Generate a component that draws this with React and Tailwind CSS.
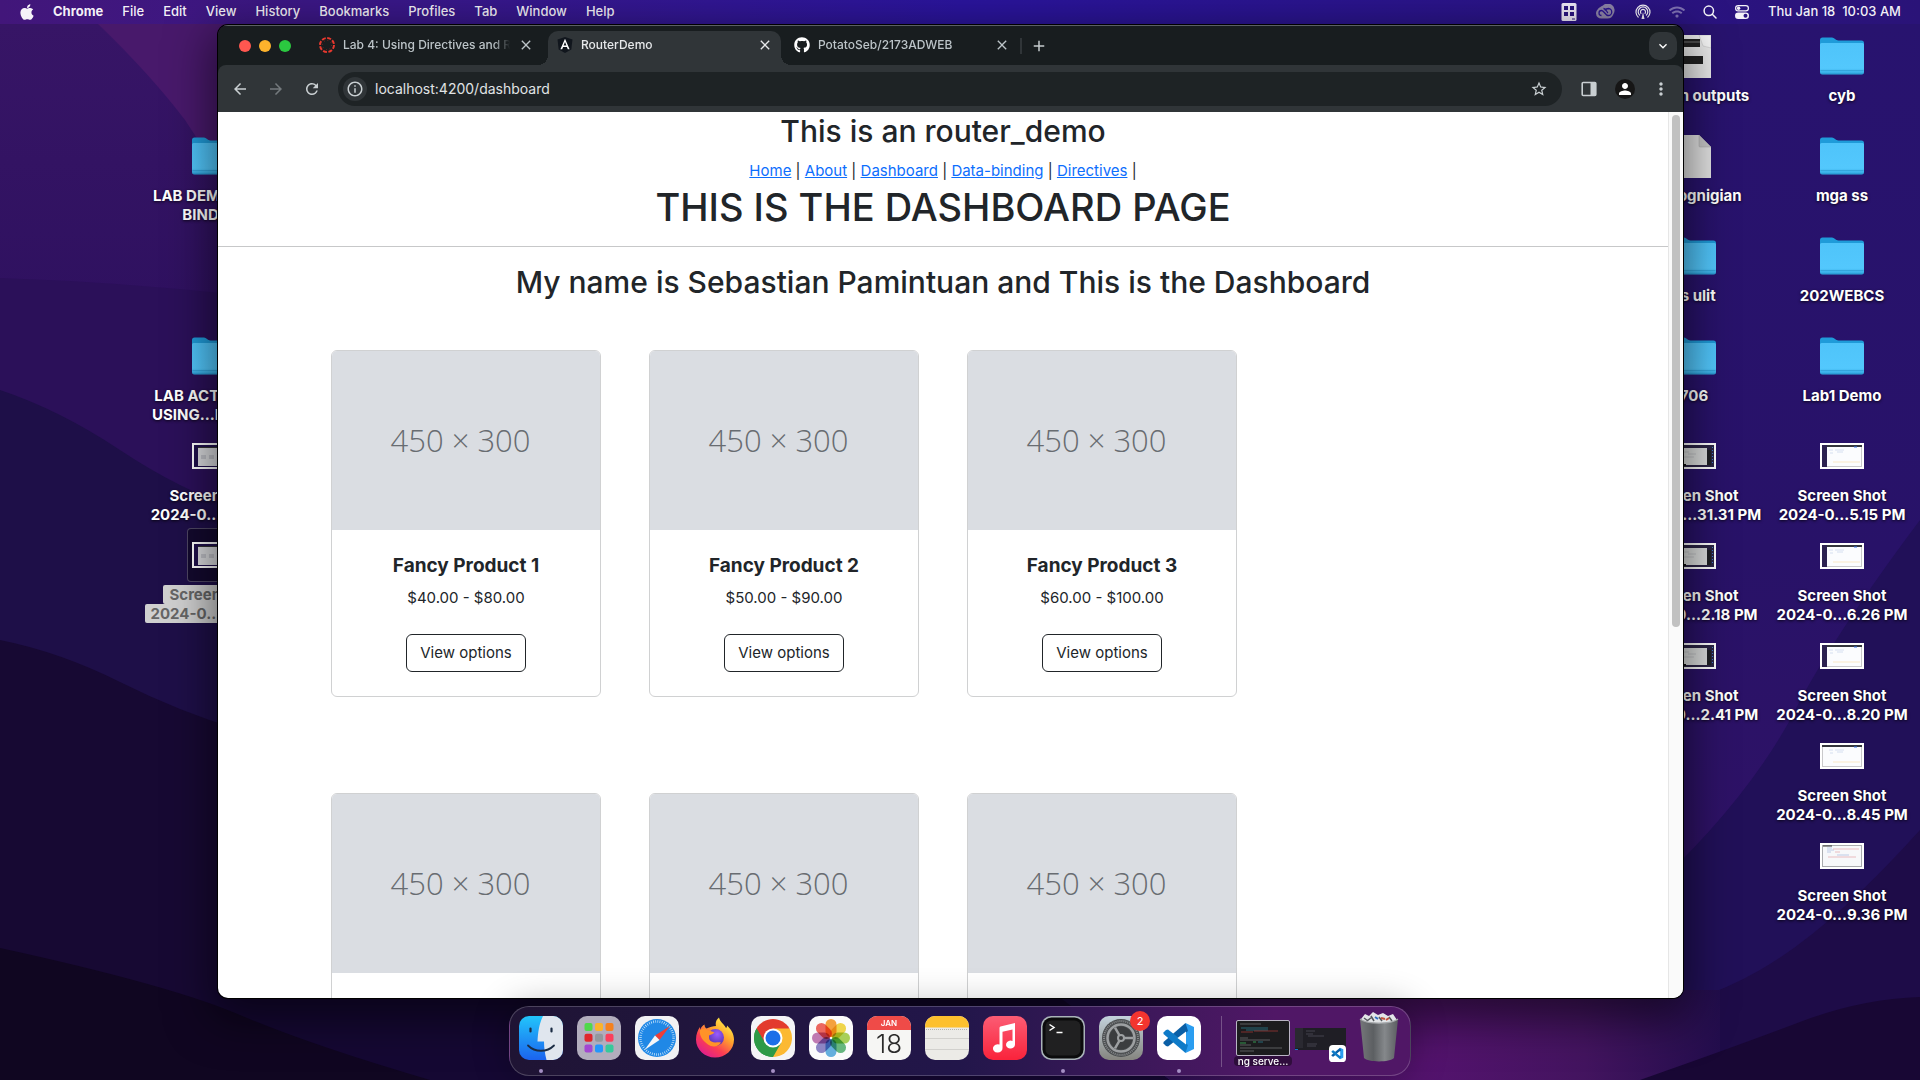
import React from "react";
import { FaApple, FaGithub, FaWifi } from "react-icons/fa";
import {
  MdArrowBack,
  MdArrowForward,
  MdRefresh,
  MdStarBorder,
  MdInfoOutline,
  MdMoreVert,
  MdExpandMore,
  MdPerson,
  MdClose,
  MdAdd,
} from "react-icons/md";

const menus = ["File", "Edit", "View", "History", "Bookmarks", "Profiles", "Tab", "Window", "Help"];

const links = ["Home", "About", "Dashboard", "Data-binding", "Directives"];

const products = [
  { name: "Fancy Product 1", price: "$40.00 - $80.00" },
  { name: "Fancy Product 2", price: "$50.00 - $90.00" },
  { name: "Fancy Product 3", price: "$60.00 - $100.00" },
  { name: "Fancy Product 4", price: "$70.00 - $110.00" },
  { name: "Fancy Product 5", price: "$80.00 - $120.00" },
  { name: "Fancy Product 6", price: "$90.00 - $130.00" },
];

const leftColumn = [
  null,
  { kind: "folder", lines: ["LAB DEMO DATA", "BINDING"] },
  null,
  { kind: "folder", lines: ["LAB ACTIVITY 4", "USING...ROUTER"] },
  { kind: "shot", look: "dark", lines: ["Screen Shot", "2024-0...0.12 PM"] },
  { kind: "shot", look: "dark", selected: true, lines: ["Screen Shot", "2024-0...1.47 PM"] },
];

const middleColumn = [
  { kind: "paper", lines: ["screen outputs"] },
  { kind: "file", lines: ["mecognigian"] },
  { kind: "folder", lines: ["ss ulit"] },
  { kind: "folder", lines: ["706"] },
  { kind: "shot", look: "window", lines: ["Screen Shot", "2024-0...31.31 PM"] },
  { kind: "shot", look: "window", lines: ["Screen Shot", "2024-0...2.18 PM"] },
  { kind: "shot", look: "window", lines: ["Screen Shot", "2024-0...2.41 PM"] },
];

const rightColumn = [
  { kind: "folder", lines: ["cyb"] },
  { kind: "folder", lines: ["mga ss"] },
  { kind: "folder", lines: ["202WEBCS"] },
  { kind: "folder", lines: ["Lab1 Demo"] },
  { kind: "shot", look: "browser", lines: ["Screen Shot", "2024-0...5.15 PM"] },
  { kind: "shot", look: "browser", lines: ["Screen Shot", "2024-0...6.26 PM"] },
  { kind: "shot", look: "browser", lines: ["Screen Shot", "2024-0...8.20 PM"] },
  { kind: "shot", look: "light", lines: ["Screen Shot", "2024-0...8.45 PM"] },
  { kind: "shot", look: "code", lines: ["Screen Shot", "2024-0...9.36 PM"] },
];

function Wallpaper() {
  return (
    <svg aria-hidden="true" viewBox="0 0 1920 1080" preserveAspectRatio="none" className="absolute inset-0 h-full w-full">
      <defs>
        <linearGradient id="wpBase" x1="0" y1="0" x2="1" y2="0">
          <stop offset="0" stopColor="#36155f" />
          <stop offset="0.3" stopColor="#31159a" />
          <stop offset="0.8" stopColor="#291380" />
          <stop offset="1" stopColor="#271268" />
        </linearGradient>
        <linearGradient id="wpLeft" gradientUnits="userSpaceOnUse" x1="0" y1="24" x2="0" y2="300">
          <stop offset="0" stopColor="#371566" />
          <stop offset="1" stopColor="#2f1160" />
        </linearGradient>
        <linearGradient id="wpRight" x1="0" y1="0" x2="0" y2="1">
          <stop offset="0" stopColor="#28136f" />
          <stop offset="0.5" stopColor="#281268" />
          <stop offset="0.8" stopColor="#2f1266" />
          <stop offset="1" stopColor="#2b1160" />
        </linearGradient>
        <radialGradient id="wpGlow" gradientUnits="userSpaceOnUse" cx="1420" cy="1060" r="330">
          <stop offset="0" stopColor="#55136f" />
          <stop offset="0.5" stopColor="#43145f" />
          <stop offset="1" stopColor="#1c0c48" />
        </radialGradient>
      </defs>
      <rect width="1920" height="1080" fill="url(#wpBase)" />
      <path d="M0 24H600V1080H0Z" fill="url(#wpLeft)" />
      <path d="M98 24Q150 74 185 120Q215 165 240 210V24Z" fill="#48196b" />
      <path d="M0 278Q120 282 240 295V540H0Z" fill="#2b1059" />
      <path d="M0 390Q60 410 120 450T240 510V1080H0Z" fill="#1e0f48" />
      <path d="M0 640Q60 652 120 682T240 730V1080H0Z" fill="#170933" />
      <path d="M1600 24H1920V1080H1600Z" fill="url(#wpRight)" />
      <path d="M1920 520Q1830 640 1790 720Q1740 810 1640 900V1080H1920Z" fill="#211058" />
      <path d="M1920 830Q1830 930 1760 970T1600 1020V1080H1920Z" fill="#1e0c48" />
      <path d="M200 990H1060L1170 1080H200Z" fill="#150833" />
      <path d="M1050 990L1170 1080H1720V990Z" fill="url(#wpGlow)" />
      <path d="M0 948Q170 985 240 1015T430 1080H0Z" fill="#100621" />
      <path d="M1640 1080Q1740 1045 1800 1022T1920 997V1080Z" fill="#180734" />
    </svg>
  );
}

function FolderIcon() {
  return (
    <svg aria-hidden="true" viewBox="0 0 44 38" className="h-[38px] w-11">
      <defs>
        <linearGradient id="folderFront" x1="0" y1="0" x2="0" y2="1">
          <stop offset="0" stopColor="#4fc4fa" />
          <stop offset="0.8" stopColor="#53c8fd" />
          <stop offset="1" stopColor="#2fa6de" />
        </linearGradient>
      </defs>
      <path d="M0 3a2.500 2.500 0 0 1 2.500-2.500H12c2.500 0 3.500 3 6.500 3H41.500A2.500 2.500 0 0 1 44 6V20H0Z" fill="#1f9bd9" />
      <path d="M0 7.500a1.500 1.500 0 0 1 1.500-1.500H42.500a1.500 1.500 0 0 1 1.500 1.500V35a2.500 2.500 0 0 1-2.500 2.500H2.500A2.500 2.500 0 0 1 0 35Z" fill="url(#folderFront)" />
      <path d="M0.500 33.500H43.500M1 36.800H43" stroke="#1c86bd" strokeWidth="0.600" opacity="0.700" />
    </svg>
  );
}

function PaperIcon() {
  return (
    <svg aria-hidden="true" viewBox="0 0 34 43" className="h-[43px] w-[34px]">
      <rect width="34" height="43" fill="#ececec" />
      <path d="M0 4H23V12H0ZM0 21H26V29H0Z" fill="#222" />
      <path d="M0 7H23" stroke="#777" />
      <path d="M22 0H34V13L26 11Z" fill="#f8f8f8" stroke="#c8c8c8" strokeWidth="0.600" />
    </svg>
  );
}

function FileIcon() {
  return (
    <svg aria-hidden="true" viewBox="0 0 34 43" className="h-[43px] w-[34px]">
      <path d="M0 0H22L34 12V43H0Z" fill="#e3e3e3" />
      <path d="M22 0L34 12H23a1 1 0 0 1-1-1Z" fill="#c9c9c9" stroke="#aaa" strokeWidth="0.500" />
    </svg>
  );
}

function ShotIcon({ look }) {
  return (
    <svg aria-hidden="true" viewBox="0 0 44 26" className="h-[26px] w-11">
      <rect width="44" height="26" fill="#fff" />
      {look === "dark" && (
        <g>
          <rect x="2" y="2" width="40" height="22" fill="#20104c" />
          <rect x="6" y="4" width="30" height="19" fill="#d9dadd" />
          <path d="M6 4.500H36" stroke="#333" />
          <path d="M9 12h5v4H9ZM17 12h5v4H17ZM25 12h5v4H25Z" fill="#bfc0c6" />
        </g>
      )}
      {look === "window" && (
        <g>
          <rect x="2" y="2" width="40" height="22" fill="#2b2444" />
          <rect x="4" y="5" width="31" height="17" fill="#dcdedd" />
          <path d="M35 7h4v15h-4Z" fill="#202124" />
          <path d="M3 22H14" stroke="#111" strokeWidth="2" />
          <path d="M12 9h5M16 11h8M12 14h10" stroke="#b8babd" strokeWidth="0.700" />
          <path d="M40.500 4V20" stroke="#3d7bd0" strokeDasharray="1 2" />
        </g>
      )}
      {(look === "browser" || look === "light") && (
        <g>
          <rect x="2" y="2" width="40" height="22" fill="#c9c9cb" />
          <rect x="3" y="4" width="38" height="19" fill="#fbfcfe" />
          <path d="M2 3H42" stroke="#33353c" strokeWidth="2" />
          {look === "browser" && <rect x="2" y="2" width="5" height="22" fill="#2c2150" />}
          <path d="M9 7h4M15 7h9M17 9h6M10 10h3" stroke="#cdd8ee" strokeWidth="0.800" />
          <path d="M34 4h3" stroke="#3a76e8" />
          <path d="M13 19H40" stroke="#fae9c8" />
        </g>
      )}
      {look === "code" && (
        <g>
          <rect x="2.500" y="2.500" width="39" height="21" fill="#f7f8fa" stroke="#a9abae" />
          <path d="M3 3h9" stroke="#333" strokeWidth="1" />
          <path d="M7 5h5M7 7h7M7 9h4M17 12h12" stroke="#b6c6e4" strokeWidth="0.900" />
          <path d="M13 6h26M15 9h5M8 14h28" stroke="#e6b5ba" strokeWidth="0.900" />
        </g>
      )}
    </svg>
  );
}

function DesktopItem({ item }) {
  if (!item) return <li className="h-[100px]" />;
  return (
    <li className="flex h-[100px] flex-col items-center">
      <div
        className={
          item.selected
            ? "mb-[3px] flex h-[54px] w-[54px] items-center justify-center rounded-sm border border-white/25 bg-black/35"
            : "mb-0.5 flex h-14 items-center justify-center"
        }
      >
        {item.kind === "folder" && <FolderIcon />}
        {item.kind === "paper" && <PaperIcon />}
        {item.kind === "file" && <FileIcon />}
        {item.kind === "shot" && <ShotIcon look={item.look} />}
      </div>
      <p className="flex flex-col items-center text-[15px] font-bold leading-[19px] whitespace-nowrap">
        {item.lines.map((line) => (
          <span
            key={line}
            className={
              item.selected
                ? "rounded-xs bg-[#d0d0d0] px-1.5 text-[#666]"
                : "text-white [text-shadow:0_1px_3px_rgba(0,0,0,0.8)]"
            }
          >
            {line}
          </span>
        ))}
      </p>
    </li>
  );
}

function MenuBar() {
  return (
    <header className="absolute inset-x-0 top-0 flex h-6 items-center bg-linear-to-r from-[#42167a] via-[#2a149c] to-[#2a1378] pr-[19px] pl-[18px] text-[13px] text-white/95">
      <button type="button" aria-label="Apple menu" className="mr-[17px]">
        <FaApple className="h-[18px] w-[18px]" />
      </button>
      <nav className="flex items-center gap-[19px]">
        <button type="button" className="font-bold">Chrome</button>
        {menus.map((m) => (
          <button key={m} type="button" className="font-medium">{m}</button>
        ))}
      </nav>
      <div className="ml-auto flex items-center">
        <svg aria-hidden="true" viewBox="0 0 16 18" className="mr-[18px] h-[18px] w-4">
          <rect x="0.500" width="15" height="18" rx="1.500" fill="#eee9f8" />
          <path d="M3 3h4v4H3ZM9 3h4v4H9ZM3 9h4v4H3ZM9 9h4v4H9Z" fill="#2b1680" />
          <path d="M11 16h3" stroke="#2b1680" />
        </svg>
        <svg aria-hidden="true" viewBox="0 0 20 16" className="mr-5 h-4 w-5 text-[#8d84a8]">
          <path d="M8 1.500a6.800 6.800 0 0 1 10.500 8.500c-1.200 3-3 4.500-6 4.500H6.500A5.200 5.200 0 0 1 1 9.500C1 6.500 3.500 3.500 8 1.500Z" fill="currentColor" />
          <path d="M6.500 11.500a2.500 2.500 0 0 1 0-5c2.500 0 4 5 6.500 5a3.500 3.500 0 0 0 .5-7c-2 0-3 1-3.500 2M8.500 4.500c2.500 0 3.500 4 4.500 4.500" fill="none" stroke="#2a1490" strokeWidth="1.300" />
        </svg>
        <svg aria-hidden="true" viewBox="0 0 16 16" className="mr-[18px] h-4 w-4" fill="none" stroke="currentColor" strokeWidth="1.200">
          <path d="M3.500 13.500a7 7 0 1 1 9 0" />
          <path d="M5 11.500a4.800 4.800 0 1 1 6 0" />
          <path d="M6.300 9.700a2.500 2.500 0 1 1 3.400 0" />
          <path d="M8 8L6.500 15h3Z" fill="currentColor" stroke="none" />
        </svg>
        <FaWifi aria-hidden="true" className="mr-[18px] h-4 w-4 text-white/40" />
        <svg aria-hidden="true" viewBox="0 0 14 14" className="mr-[18px] h-3.5 w-3.5" fill="none" stroke="currentColor" strokeWidth="1.500" strokeLinecap="round">
          <circle cx="5.800" cy="5.800" r="4.700" />
          <path d="M9.300 9.300L13 13" />
        </svg>
        <svg aria-hidden="true" viewBox="0 0 14 14" className="mr-[19px] h-3.5 w-3.5">
          <rect x="0.600" y="0.600" width="12.800" height="5.300" rx="2.650" fill="none" stroke="currentColor" strokeWidth="1.200" />
          <circle cx="3.600" cy="3.250" r="1.700" fill="currentColor" />
          <rect y="7.500" width="14" height="6.500" rx="3.250" fill="currentColor" />
          <circle cx="10.500" cy="10.750" r="2" fill="#2a1480" />
        </svg>
        <time className="font-medium whitespace-pre">Thu Jan 18  10:03 AM</time>
      </div>
    </header>
  );
}

function Tab({ icon, title, active, wide }) {
  return (
    <div
      className={
        active
          ? "relative flex h-[34px] w-[233px] items-center rounded-t-[10px] bg-[#303538] pr-2 pl-[9px] text-[#e6e8ea]"
          : wide
            ? "flex h-[34px] w-[239px] items-center pr-2.5 pl-[13px] text-[#bcc4c8]"
            : "flex h-[34px] w-[237px] items-center pr-3.5 pl-2 text-[#bcc4c8]"
      }
    >
      {active && (
        <>
          <span className="absolute bottom-0 -left-2.5 h-2.5 w-2.5 bg-[radial-gradient(circle_at_0_0,#181d1f_10px,#303538_10px)]" />
          <span className="absolute -right-2.5 bottom-0 h-2.5 w-2.5 bg-[radial-gradient(circle_at_100%_0,#181d1f_10px,#303538_10px)]" />
        </>
      )}
      <span className="mb-1.5 flex w-full items-center">
        {icon}
        <button
          type="button"
          className="mr-2 ml-2 min-w-0 flex-1 overflow-hidden text-left text-[12px] font-medium whitespace-nowrap [mask-image:linear-gradient(to_right,#000_90%,transparent)]"
        >
          {title}
        </button>
        <button type="button" aria-label={`Close ${title}`}>
          <MdClose className="h-4 w-4" />
        </button>
      </span>
    </div>
  );
}

function BrowserChrome() {
  return (
    <div className="bg-[#181d1f]">
      <div className="flex h-10 items-end border-t border-[#5b6063]">
        <div className="flex w-[101px] items-center gap-2 self-center pl-[21px]">
          <button type="button" aria-label="Close window" className="h-3 w-3 rounded-full bg-[#ff5750]" />
          <button type="button" aria-label="Minimize window" className="h-3 w-3 rounded-full bg-[#fdb32c]" />
          <button type="button" aria-label="Zoom window" className="h-3 w-3 rounded-full bg-[#2bc840]" />
        </div>
        <div className="-ml-2 flex">
          <Tab
            title="Lab 4: Using Directives and Router"
            icon={
              <svg aria-hidden="true" viewBox="0 0 16 16" className="h-4 w-4 shrink-0">
                <circle cx="8" cy="8" r="7" fill="none" stroke="#e5382e" strokeWidth="2" strokeDasharray="4 1.500" />
                <circle cx="8" cy="8" r="4.600" fill="none" stroke="#a32a25" strokeWidth="0.800" strokeDasharray="0.800 2.800" />
              </svg>
            }
          />
          <Tab
            active
            title="RouterDemo"
            icon={
              <svg aria-hidden="true" viewBox="0 0 16 16" className="h-4 w-4 shrink-0">
                <path d="M8 0L15.500 2.600L14.300 12.500L8 16L1.700 12.500L.5 2.600Z" fill="#11161d" />
                <path d="M8 1.800L3.400 12.200H5.200L6.100 9.900H9.900L10.800 12.200H12.600ZM8 5.100L9.400 8.400H6.600Z" fill="#fff" fillRule="evenodd" />
              </svg>
            }
          />
          <Tab wide title="PotatoSeb/2173ADWEB" icon={<FaGithub aria-hidden="true" className="h-4 w-4 shrink-0 text-white" />} />
        </div>
        <div className="flex items-center self-center">
          <span className="h-4 w-0.5 bg-[#303538]" />
          <button type="button" aria-label="New tab" className="ml-2 text-[#c5cbce]">
            <MdAdd className="h-[18px] w-[18px]" />
          </button>
        </div>
        <button
          type="button"
          aria-label="Search tabs"
          className="mr-1.5 ml-auto flex h-7 w-7 items-center justify-center self-center rounded-[10px] bg-[#303538] text-white"
        >
          <MdExpandMore className="h-4 w-4" />
        </button>
      </div>
      <div className="flex h-[47px] items-center rounded-t-lg bg-[#303538] text-[#c9cfd2]">
        <button type="button" aria-label="Back" className="ml-[13px]">
          <MdArrowBack className="h-[18px] w-[18px]" />
        </button>
        <button type="button" aria-label="Forward" className="ml-[18px] text-[#747a7d]">
          <MdArrowForward className="h-[18px] w-[18px]" />
        </button>
        <button type="button" aria-label="Reload" className="mr-[17px] ml-[18px]">
          <MdRefresh className="h-[18px] w-[18px]" />
        </button>
        <div className="flex h-[34px] flex-1 items-center rounded-full bg-[#1e2325] pr-3.5 pl-[5px]">
          <button type="button" aria-label="View site information" className="flex h-6 w-6 items-center justify-center rounded-full bg-[#303538]">
            <MdInfoOutline className="h-[18px] w-[18px]" />
          </button>
          <input
            type="text"
            aria-label="Address"
            defaultValue="localhost:4200/dashboard"
            className="ml-2 flex-1 bg-transparent text-[14px] text-[#e0e3e5] outline-none"
          />
          <button type="button" aria-label="Bookmark this tab">
            <MdStarBorder className="h-[18px] w-[18px]" />
          </button>
        </div>
        <button type="button" aria-label="Side panel" className="ml-[19px]">
          <svg aria-hidden="true" viewBox="0 0 16 16" className="h-4 w-4">
            <rect x="1.200" y="1.500" width="13.600" height="13" rx="1" fill="none" stroke="currentColor" strokeWidth="1.600" />
            <path d="M9.500 1.500H15V14.500H9.500Z" fill="currentColor" />
          </svg>
        </button>
        <button type="button" aria-label="Profile" className="ml-[18px] flex h-5 w-5 items-center justify-center rounded-full bg-[#161616] text-white">
          <MdPerson className="h-[18px] w-[18px]" />
        </button>
        <button type="button" aria-label="Menu" className="mr-3 ml-4">
          <MdMoreVert className="h-5 w-5" />
        </button>
      </div>
    </div>
  );
}

function ProductCard({ product }) {
  return (
    <article className="overflow-hidden rounded-md border border-[#d0d1d2] bg-white text-center">
      <div className="flex h-[179px] items-center justify-center bg-[#dadde2] pr-[11px] font-['Open_Sans',sans-serif] text-[31px] font-light text-[#686c71]">
        450 × 300
      </div>
      <div className="p-6">
        <h5 className="mb-2 text-[19px] font-bold leading-6">{product.name}</h5>
        <p className="text-[15px] leading-6">{product.price}</p>
      </div>
      <div className="px-6 pb-6">
        <button type="button" className="h-[38px] rounded-md border border-[#212529] px-[13px] text-[15px] leading-6">
          View options
        </button>
      </div>
    </article>
  );
}

function Page() {
  return (
    <div className="flex min-h-0 flex-1 bg-white">
      <main className="min-w-0 flex-1 overflow-hidden text-center text-[#212529]">
        <h2 className="mb-2 text-[30px] font-medium leading-[39px]">This is an router_demo</h2>
        <nav className="text-[15px] leading-6">
          {links.map((l) => (
            <React.Fragment key={l}>
              <a href="#" className="text-[#0d6efd] underline">{l}</a>
              {" | "}
            </React.Fragment>
          ))}
        </nav>
        <h1 className="mb-2 text-[38px] font-medium leading-[48px]">THIS IS THE DASHBOARD PAGE</h1>
        <hr className="mt-[15px] mb-4 border-[#c7c8c9]" />
        <h2 className="mb-2 text-[30px] font-medium leading-[39px]">My name is Sebastian Pamintuan and This is the Dashboard</h2>
        <section className="mt-12 grid grid-cols-[repeat(3,270px)] gap-x-12 gap-y-24 pl-[113px]">
          {products.map((p) => (
            <ProductCard key={p.name} product={p} />
          ))}
        </section>
      </main>
      <div className="w-[15px] border-l border-[#e6e6e6] bg-[#fafafa] pt-[3px]">
        <div className="mx-auto h-[58%] w-2 rounded-full bg-[#c1c1c1]" />
      </div>
    </div>
  );
}

function FinderIcon() {
  return (
    <svg aria-hidden="true" viewBox="0 0 44 44" className="h-11 w-11">
      <defs>
        <linearGradient id="finderBlue" x1="0" y1="0" x2="0" y2="1">
          <stop offset="0" stopColor="#22c5fb" />
          <stop offset="1" stopColor="#1b63ee" />
        </linearGradient>
        <clipPath id="finderClip"><rect width="44" height="44" rx="10" /></clipPath>
      </defs>
      <g clipPath="url(#finderClip)">
        <rect width="44" height="44" fill="url(#finderBlue)" />
        <path d="M24 0C20 8 19 17 18.500 25.500H25C25 32 26 38 27.500 44H44V0Z" fill="#e0e6ee" />
      </g>
      <path d="M11.500 12.500V15.500M32.500 12.500V15.500" stroke="#1b2c44" strokeWidth="2.200" strokeLinecap="round" />
      <path d="M9 29.500C16 36.500 28 36.500 35 29.500" fill="none" stroke="#1b2c44" strokeWidth="1.800" strokeLinecap="round" />
    </svg>
  );
}

const padColors = ["#4fd94b", "#fbb32b", "#f5811f", "#e0262b", "#93989d", "#fb3f5c", "#a347d1", "#2596fb", "#37c99b"];

function LaunchpadIcon() {
  return (
    <svg aria-hidden="true" viewBox="0 0 44 44" className="h-11 w-11">
      <rect width="44" height="44" rx="10" fill="#b2adbd" />
      {padColors.map((c, i) => (
        <rect key={c} x={7.500 + (i % 3) * 10.500} y={7 + Math.floor(i / 3) * 10.700} width="8" height="8" rx="2" fill={c} />
      ))}
    </svg>
  );
}

function SafariIcon() {
  return (
    <svg aria-hidden="true" viewBox="0 0 44 44" className="h-11 w-11">
      <rect width="44" height="44" rx="10" fill="#f1f1f3" />
      <circle cx="22" cy="22" r="19" fill="#2088e6" />
      <circle cx="22" cy="22" r="16.500" fill="none" stroke="#d5ebfc" strokeWidth="2.500" strokeDasharray="0.700 1.460" />
      <path d="M35 10L20 19.500L24.500 24Z" fill="#ee3d37" />
      <path d="M9.500 34L20 19.500L24.500 24Z" fill="#f6f6f8" />
    </svg>
  );
}

function FirefoxIcon() {
  return (
    <svg aria-hidden="true" viewBox="0 0 44 44" className="h-11 w-11">
      <defs>
        <linearGradient id="foxBody" x1="0.850" y1="0.100" x2="0.250" y2="0.950">
          <stop offset="0" stopColor="#fff04a" />
          <stop offset="0.350" stopColor="#ffa52c" />
          <stop offset="0.700" stopColor="#fb3d53" />
          <stop offset="1" stopColor="#e0208a" />
        </linearGradient>
        <radialGradient id="foxGlobe" cx="0.600" cy="0.300" r="0.800">
          <stop offset="0" stopColor="#9a5cff" />
          <stop offset="1" stopColor="#4a2b9c" />
        </radialGradient>
      </defs>
      <path d="M23 10C22 6 24 3 26 1.500C27 6 31 8 33 12C34 11.500 34 10 34 9.500C38 13 41 18 41 23.500C41 34 32.500 41.500 22 41.500S3 33.500 3 23.500C3 18 5 13.500 7 11V14C8 11 10 9.500 11.500 8.500C11.500 10 12 11.500 13.500 12.500C17 11 20 10 23 10Z" fill="url(#foxBody)" />
      <circle cx="22.500" cy="21.500" r="8.500" fill="url(#foxGlobe)" />
      <path d="M7 14C10 12 13 12.500 15 14.500C17 15 19 15 21.500 16.500C19.500 18.500 17 18.500 16 19.500C16 22 16 24.500 18.500 25.500C22 27.500 25 25.500 28 26.500C25.500 31 19 31.500 15 28.500C10 25 6 20 7 14Z" fill="#ff9328" />
    </svg>
  );
}

function ChromeIcon() {
  return (
    <svg aria-hidden="true" viewBox="0 0 44 44" className="h-11 w-11">
      <rect width="44" height="44" rx="10" fill="#f4f4f6" />
      <path d="M22 22L5.550 12.500A19 19 0 0 1 38.450 12.500Z" fill="#e33b2e" />
      <path d="M22 22L38.450 12.500A19 19 0 0 1 22 41Z" fill="#fcb932" />
      <path d="M22 22L22 41A19 19 0 0 1 5.550 12.500Z" fill="#2d9a47" />
      <path d="M22 12.500H38.450L30.200 26.700Z" fill="#fcb932" />
      <path d="M13.800 26.700L5.550 12.500L22 12.500Z" fill="#e33b2e" />
      <path d="M13.800 26.700L5.550 12.500A19 19 0 0 0 22 41L30.200 26.700Z" fill="#2d9a47" />
      <circle cx="22" cy="22" r="9.500" fill="#fff" />
      <circle cx="22" cy="22" r="7.500" fill="#1d6fe8" />
    </svg>
  );
}

const petals = ["#f7941d", "#f1d22c", "#9ccb3b", "#4fae6b", "#4aa3dc", "#7a72bd", "#b765a8", "#ee4f45"];

function PhotosIcon() {
  return (
    <svg aria-hidden="true" viewBox="0 0 44 44" className="h-11 w-11">
      <rect width="44" height="44" rx="10" fill="#fbfbfb" />
      {petals.map((c, i) => (
        <rect key={c} x="16.500" y="3" width="11" height="18" rx="5.500" fill={c} opacity="0.850" transform={`rotate(${i * 45} 22 22)`} className="mix-blend-multiply" />
      ))}
    </svg>
  );
}

function NotesIcon() {
  return (
    <svg aria-hidden="true" viewBox="0 0 44 44" className="h-11 w-11">
      <rect width="44" height="44" rx="10" fill="#ecebe7" />
      <path d="M0 11.500V10A10 10 0 0 1 10 0H34A10 10 0 0 1 44 10V11.500Z" fill="#fdc02e" />
      <path d="M1 13.500H43" stroke="#b6b4ae" strokeWidth="1" strokeDasharray="1 1" />
      <path d="M0 22.500H44M0 33.500H44" stroke="#cbcac6" strokeWidth="0.800" />
    </svg>
  );
}

function MusicIcon() {
  return (
    <svg aria-hidden="true" viewBox="0 0 44 44" className="h-11 w-11">
      <defs>
        <linearGradient id="musicRed" x1="0" y1="0" x2="0" y2="1">
          <stop offset="0" stopColor="#fb5c74" />
          <stop offset="1" stopColor="#fa233b" />
        </linearGradient>
      </defs>
      <rect width="44" height="44" rx="10" fill="url(#musicRed)" />
      <path d="M17.500 10.500L32 7V28.500A4.500 4 0 1 1 29.500 25V13.500L19.500 15.800V32A4.800 4.200 0 1 1 16.500 28.500V12Q16.500 10.800 17.500 10.500Z" fill="#fff" />
    </svg>
  );
}

function TerminalIcon() {
  return (
    <svg aria-hidden="true" viewBox="0 0 44 44" className="h-11 w-11">
      <rect width="44" height="44" rx="10" fill="#a9b3b8" />
      <rect x="1.500" y="1.500" width="41" height="41" rx="9" fill="#0b0b0c" />
      <rect x="4.500" y="4.500" width="35" height="35" rx="6" fill="#202021" />
      <path d="M8.500 8.500L13 11.500L8.500 14.500M15.500 16.500H21.500" fill="none" stroke="#fff" strokeWidth="1.500" />
    </svg>
  );
}

function SettingsIcon() {
  return (
    <svg aria-hidden="true" viewBox="0 0 44 44" className="h-11 w-11">
      <defs>
        <linearGradient id="gearBg" x1="0" y1="0" x2="0" y2="1">
          <stop offset="0" stopColor="#c3d2dc" />
          <stop offset="1" stopColor="#85857f" />
        </linearGradient>
      </defs>
      <rect width="44" height="44" rx="10" fill="url(#gearBg)" />
      <circle cx="22" cy="22" r="19" fill="#4b4e50" />
      <circle cx="22" cy="22" r="17" fill="none" stroke="#85888a" strokeWidth="2" strokeDasharray="1 1" />
      <circle cx="22" cy="22" r="13.500" fill="none" stroke="#9da0a2" strokeWidth="2.500" />
      <circle cx="22" cy="22" r="11.500" fill="#3b3d3f" />
      <path d="M22 22L34 22M22 22L16 11.600M22 22L16 32.400" stroke="#9da0a2" strokeWidth="2.500" />
      <circle cx="22" cy="22" r="4" fill="#9da0a2" />
      <circle cx="22" cy="22" r="2" fill="#3b3d3f" />
    </svg>
  );
}

function CodeIcon({ small }) {
  return (
    <svg aria-hidden="true" viewBox="0 0 44 44" className={small ? "h-[17px] w-[17px]" : "h-11 w-11"}>
      <rect width="44" height="44" rx="10" fill="#fff" />
      <path d="M28.500 7L37 11V33L28.500 37Z" fill="#2a9df0" />
      <path d="M28.500 7L31 15L11 30.500L9 30L6.500 27.500V26Z" fill="#0a5fa6" />
      <path d="M28.500 37L31 29L11 13.500L9 14L6.500 16.500V18Z" fill="#0f7bc8" />
      <path d="M29 15.500V28.500L20.500 22Z" fill="#fff" />
    </svg>
  );
}

function TrashIcon() {
  return (
    <svg aria-hidden="true" viewBox="0 0 40 50" className="h-[50px] w-10">
      <defs>
        <linearGradient id="trashBody" x1="0" y1="0" x2="1" y2="0">
          <stop offset="0" stopColor="#75777a" />
          <stop offset="0.350" stopColor="#5c5f62" />
          <stop offset="0.650" stopColor="#85888b" />
          <stop offset="1" stopColor="#5b5d61" />
        </linearGradient>
      </defs>
      <path d="M2 7L6 2L10 4L14 0L19 3L24 1L29 4L34 2L38 8L35 12H5Z" fill="#e3e5e8" />
      <path d="M5 6l4 3M12 4l3 5M20 5l3 4M30 5l3 4M8 9l5-4" stroke="#55585d" strokeWidth="1.500" />
      <path d="M16 5l3 2" stroke="#2f6fc2" strokeWidth="2" />
      <path d="M22 6l4 1M27 8l3-2" stroke="#c2523b" strokeWidth="2" />
      <path d="M1 7C8 12.500 32 12.500 39 7L35 46C31 50.500 9 50.500 5 46Z" fill="url(#trashBody)" />
      <path d="M1 7C8 12.500 32 12.500 39 7" fill="none" stroke="#a7aaad" strokeWidth="1.200" />
    </svg>
  );
}

function CalendarIcon() {
  return (
    <span className="flex h-11 w-11 flex-col overflow-hidden rounded-[10px] bg-[#f6f6f4] text-center">
      <span className="h-3.5 bg-[#ef4b48] text-[8px] font-semibold leading-[15px] text-white">JAN</span>
      <span className="text-[26px] font-light leading-[28px] text-[#2a2a2a]">18</span>
    </span>
  );
}

const apps = [
  { name: "Finder", icon: <FinderIcon />, running: true },
  { name: "Launchpad", icon: <LaunchpadIcon /> },
  { name: "Safari", icon: <SafariIcon /> },
  { name: "Firefox", icon: <FirefoxIcon /> },
  { name: "Google Chrome", icon: <ChromeIcon />, running: true },
  { name: "Photos", icon: <PhotosIcon /> },
  { name: "Calendar", icon: <CalendarIcon /> },
  { name: "Notes", icon: <NotesIcon /> },
  { name: "Music", icon: <MusicIcon /> },
  { name: "Terminal", icon: <TerminalIcon />, running: true },
  { name: "System Preferences", icon: <SettingsIcon />, badge: "2" },
  { name: "Visual Studio Code", icon: <CodeIcon />, running: true },
];

function Dock() {
  return (
    <footer className="absolute bottom-1 left-1/2 flex h-[70px] -translate-x-1/2 items-start rounded-[20px] border border-white/20 bg-linear-to-r from-[#1f1434] via-[#22164a] via-50% to-[#501766] to-85% px-[9px] pt-[9px] shadow-[0_0_36px_rgba(0,0,0,0.3)]">
      <div className="flex gap-3.5">
        {apps.map((a) => (
          <button key={a.name} type="button" aria-label={a.name} className="relative flex flex-col items-center">
            {a.icon}
            {a.badge && (
              <span className="absolute -top-[5px] -right-[7px] flex h-5 w-5 items-center justify-center rounded-full bg-[#f3352f] text-[11px] text-white">
                {a.badge}
              </span>
            )}
            {a.running && <span className="mt-[9px] h-1 w-1 rounded-full bg-[#a58fc4]" />}
          </button>
        ))}
      </div>
      <span className="mr-[14px] ml-5 h-[51px] w-px bg-white/25" />
      <button type="button" aria-label="ng serve window" className="mt-1 flex w-[54px] flex-col items-center">
        <svg aria-hidden="true" viewBox="0 0 54 36" className="h-9 w-[54px]">
          <rect x="0.500" y="0.500" width="53" height="35" rx="1.500" fill="#1c1c1e" stroke="#b9b4c4" />
          <path d="M4 4h21M4 18h8M4 20h30M4 25h11M4 28h42M4 31h14" stroke="#77797c" strokeWidth="0.700" />
          <path d="M5 8h27M10 10h22M22 22h5" stroke="#2b7f8d" strokeWidth="0.800" />
          <path d="M5 12h12M18 11h24" stroke="#9c3834" strokeWidth="0.800" />
          <path d="M4 23h6M17 22h3" stroke="#3cb85a" strokeWidth="0.800" />
        </svg>
        <span className="rounded-sm bg-black/40 px-1 text-[10px] font-medium leading-[10px] whitespace-nowrap text-white">ng serve…</span>
      </button>
      <button type="button" aria-label="Editor window" className="relative mt-3 ml-[5px] h-[22px] w-[51px]">
        <svg aria-hidden="true" viewBox="0 0 51 22" className="h-[22px] w-[51px]">
          <rect width="51" height="22" fill="#1f1e25" />
          <path d="M0 0H8V20H0Z" fill="#2a2931" />
          <path d="M11 3h9M11 6h7M13 8h16M12 16h10M12 18h9" stroke="#55555f" strokeWidth="0.700" />
          <path d="M0 21.500H3" stroke="#1677c8" />
        </svg>
        <span className="absolute right-0 -bottom-3">
          <CodeIcon small />
        </span>
      </button>
      <button type="button" aria-label="Trash" className="-mt-1 mr-0.5 ml-[13px]">
        <TrashIcon />
      </button>
    </footer>
  );
}

export default function App() {
  return (
    <div className="relative h-screen w-full overflow-hidden bg-[#1c0c48] font-[Inter,sans-serif]">
      <Wallpaper />
      <MenuBar />
      <ul className="absolute top-7 left-[139px] w-[150px]">
        {leftColumn.map((item, i) => <DesktopItem key={i} item={item} />)}
      </ul>
      <ul className="absolute top-7 right-[151px] w-[150px]">
        {middleColumn.map((item, i) => <DesktopItem key={i} item={item} />)}
      </ul>
      <ul className="absolute top-7 right-[3px] w-[150px]">
        {rightColumn.map((item, i) => <DesktopItem key={i} item={item} />)}
      </ul>
      <div className="absolute top-[25px] right-[237px] bottom-[82px] left-[218px] flex flex-col overflow-hidden rounded-[10px] shadow-[0_0_0_1px_#000,0_14px_44px_8px_rgba(0,0,0,0.5)]">
        <BrowserChrome />
        <Page />
      </div>
      <Dock />
    </div>
  );
}
